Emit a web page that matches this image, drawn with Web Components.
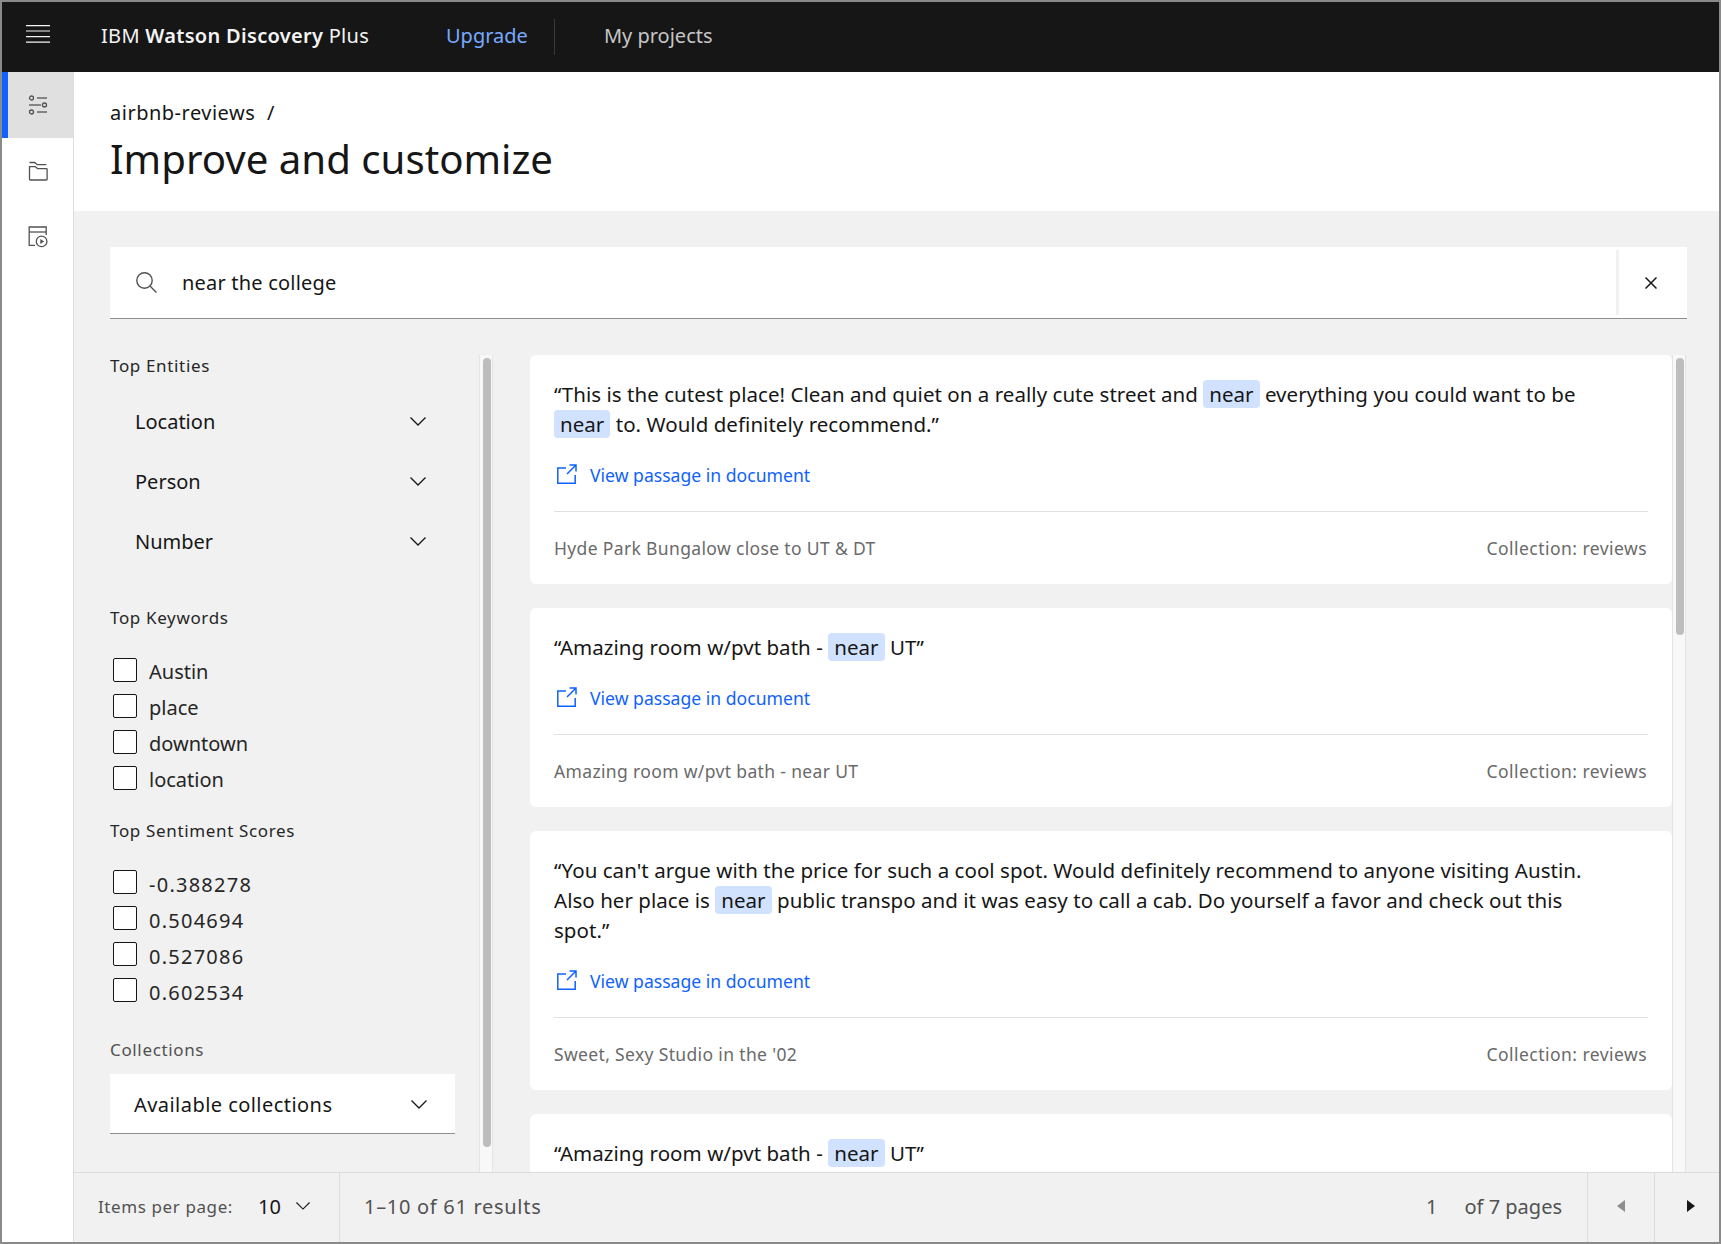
<!DOCTYPE html>
<html lang="en">
<head>
<meta charset="utf-8">
<title>IBM Watson Discovery Plus</title>
<style>
  html, body { margin: 0; padding: 0; background: #8a8a8a; }
  body { font-family: "Noto Sans", "Liberation Sans", sans-serif; color: #161616; overflow: hidden; }
</style>
</head>
<body>
<wd-app>
  <wd-topbar slot="top"></wd-topbar>
  <wd-rail slot="rail"></wd-rail>
  <wd-page-head slot="head" crumb="airbnb-reviews" title="Improve and customize"></wd-page-head>
  <wd-search slot="search" value="near the college"></wd-search>
  <wd-filters slot="filters"></wd-filters>
  <wd-results slot="results">
    <wd-result-card name="Hyde Park Bungalow close to UT &amp; DT">“This is the cutest place! Clean and quiet on a really cute street and <wd-hit>near</wd-hit> everything you could want to be<br><wd-hit>near</wd-hit> to. Would definitely recommend.”</wd-result-card>
    <wd-result-card name="Amazing room w/pvt bath - near UT">“Amazing room w/pvt bath - <wd-hit>near</wd-hit> UT”</wd-result-card>
    <wd-result-card name="Sweet, Sexy Studio in the '02">“You can't argue with the price for such a cool spot. Would definitely recommend to anyone visiting Austin.<br>Also her place is <wd-hit>near</wd-hit> public transpo and it was easy to call a cab. Do yourself a favor and check out this<br>spot.”</wd-result-card>
    <wd-result-card partial>“Amazing room w/pvt bath - <wd-hit>near</wd-hit> UT”</wd-result-card>
  </wd-results>
  <wd-pager slot="pager"></wd-pager>
</wd-app>

<script>
const chevron = `<svg width="16" height="9" viewBox="0 0 16 9" fill="none" stroke="currentColor" stroke-width="1.3"><path d="M.5.5 8 8 15.5.5"/></svg>`;

class WdApp extends HTMLElement {
  constructor() {
    super();
    this.attachShadow({ mode: 'open' });
    this.shadowRoot.innerHTML = `
      <style>
        :host {
          display: grid;
          grid-template-columns: 72px 1fr;
          grid-template-rows: 70px 1fr;
          width: 1717px;
          height: 1240px;
          margin: 2px;
          background: #fff;
          overflow: hidden;
        }
        .top { grid-column: 1 / 3; }
        .main { display: flex; flex-direction: column; min-height: 0; min-width: 0; }
        .work {
          flex: 1;
          min-height: 0;
          background: #f1f1f1;
          padding: 36px 32px 0 36px;
          display: flex;
          flex-direction: column;
          overflow: hidden;
        }
        .cols {
          flex: 1;
          min-height: 0;
          display: flex;
          margin-top: 36px;
          margin-right: 1px;
        }
      </style>
      <div class="top"><slot name="top"></slot></div>
      <slot name="rail"></slot>
      <div class="main">
        <slot name="head"></slot>
        <div class="work">
          <slot name="search"></slot>
          <div class="cols">
            <slot name="filters"></slot>
            <slot name="results"></slot>
          </div>
        </div>
        <slot name="pager"></slot>
      </div>
    `;
  }
}

class WdTopbar extends HTMLElement {
  constructor() {
    super();
    this.attachShadow({ mode: 'open' });
    this.shadowRoot.innerHTML = `
      <style>
        :host {
          display: flex;
          align-items: center;
          height: 70px;
          box-sizing: border-box;
          padding-bottom: 4px;
          background: #161616;
          color: #f4f4f4;
          font-size: 20px;
        }
        .menu { display: flex; width: 99px; padding-left: 24px; box-sizing: border-box; margin-top: -3px; }
        .brand { width: 345px; white-space: nowrap; letter-spacing: .3px; }
        .brand b { font-weight: 600; }
        .upgrade { color: #78a9ff; }
        .sep { width: 1px; height: 36px; background: #393939; margin: 4px 49px 0 26px; }
        .projects { color: #c6c6c6; }
      </style>
      <div class="menu">
        <svg width="24" height="18" viewBox="0 0 24 18" stroke="#f4f4f4" stroke-width="1.2"><path d="M0 .6h24M0 6h24M0 11.6h24M0 17.2h24"/></svg>
      </div>
      <div class="brand">IBM <b>Watson Discovery</b> Plus</div>
      <div class="upgrade">Upgrade</div>
      <div class="sep"></div>
      <div class="projects">My projects</div>
    `;
  }
}

class WdRail extends HTMLElement {
  constructor() {
    super();
    this.attachShadow({ mode: 'open' });
    this.shadowRoot.innerHTML = `
      <style>
        :host {
          display: block;
          box-sizing: border-box;
          border-right: 1px solid #dcdcdc;
          background: #fff;
          color: #525252;
        }
        .item { display: flex; align-items: center; justify-content: center; height: 66px; box-sizing: border-box; }
        .item.on { background: #e0e0e0; border-left: 6px solid #0f62fe; padding-right: 6px; }
        svg { display: block; }
      </style>
      <div class="item on">
        <svg width="20" height="20" viewBox="0 0 20 20" fill="none" stroke="currentColor" stroke-width="1.3">
          <circle cx="3.5" cy="3" r="2"/><path d="M9 3h10"/>
          <path d="M1 10h12"/><circle cx="16.5" cy="10" r="2"/>
          <circle cx="3.5" cy="17" r="2"/><path d="M9 17h10"/>
        </svg>
      </div>
      <div class="item">
        <svg width="20" height="20" viewBox="0 0 20 20" fill="none" stroke="currentColor" stroke-width="1.3">
          <path d="M1.5 1.5h5.2l2.6 2.2h9"/>
          <path d="M1.5 5.6h5.8l2.2 2h8.8a.8.8 0 0 1 .8.8v9.8a.8.8 0 0 1-.8.8H2.3a.8.8 0 0 1-.8-.8z"/>
        </svg>
      </div>
      <div class="item">
        <svg width="20" height="22" viewBox="0 0 20 22" fill="none" stroke="currentColor" stroke-width="1.3">
          <path d="M7 19.4H1.2V1h17v8"/><path d="M1.2 6h17"/>
          <circle cx="13.6" cy="15.4" r="5.3"/>
          <path d="M12.3 12.9v5l3.8-2.5z" fill="currentColor" stroke="none"/>
        </svg>
      </div>
    `;
  }
}

class WdPageHead extends HTMLElement {
  constructor() {
    super();
    this.attachShadow({ mode: 'open' });
    this.shadowRoot.innerHTML = `
      <style>
        :host {
          display: block;
          height: 139px;
          box-sizing: border-box;
          padding: 26px 0 0 36px;
          background: #fff;
        }
        .crumb { font-size: 20px; line-height: 30px; letter-spacing: .5px; }
        .crumb span { margin-left: 6px; }
        h1 { margin: 5px 0 0; font-size: 40.2px; line-height: 52px; font-weight: 400; color: #161616; }
      </style>
      <div class="crumb">${this.getAttribute('crumb')} <span>/</span></div>
      <h1>${this.getAttribute('title')}</h1>
    `;
  }
}

class WdSearch extends HTMLElement {
  constructor() {
    super();
    this.attachShadow({ mode: 'open' });
    this.shadowRoot.innerHTML = `
      <style>
        :host {
          display: flex;
          align-items: center;
          height: 72px;
          box-sizing: border-box;
          background: #fff;
          border-bottom: 1.5px solid #8d8d8d;
          flex: none;
        }
        .glass { margin-left: 26px; display: flex; color: #525252; }
        .text { margin-left: 25px; flex: 1; font-size: 20px; letter-spacing: .2px; }
        .clear {
          align-self: stretch;
          margin: 3px 0 3px;
          width: 71px;
          box-sizing: border-box;
          padding-right: 4px;
          border-left: 3px solid #f1f1f1;
          display: flex;
          align-items: center;
          justify-content: center;
        }
      </style>
      <div class="glass">
        <svg width="21" height="21" viewBox="0 0 21 21" fill="none" stroke="currentColor" stroke-width="1.4"><circle cx="8.5" cy="8.5" r="7.7"/><path d="m14 14 6.4 6.4"/></svg>
      </div>
      <div class="text">${this.getAttribute('value')}</div>
      <div class="clear">
        <svg width="12" height="12" viewBox="0 0 12 12" fill="none" stroke="#161616" stroke-width="1.5"><path d="m.5.5 11 11M11.5.5l-11 11"/></svg>
      </div>
    `;
  }
}

class WdFilters extends HTMLElement {
  constructor() {
    super();
    this.attachShadow({ mode: 'open' });
    const rows = (items, attr = '') => items.map((t) => `<wd-check ${attr}>${t}</wd-check>`).join('');
    this.shadowRoot.innerHTML = `
      <style>
        :host { display: flex; width: 383px; flex: none; min-height: 0; margin-right: 37px; }
        .panel { width: 369px; flex: none; overflow: hidden; }
        h2 { margin: 0; font-size: 17px; line-height: 22px; font-weight: 400; letter-spacing: .65px; color: #262626; }
        h2.dim { color: #525252; }
        .entities { margin: 15px 0 35px; }
        .checks { margin: 23px 0 24px; }
        .checks.two { margin: 22px 0 31px; }
        .select { margin-top: 13px; }
      </style>
      <div class="panel">
        <h2>Top Entities</h2>
        <div class="entities">
          <wd-facet>Location</wd-facet>
          <wd-facet>Person</wd-facet>
          <wd-facet>Number</wd-facet>
        </div>
        <h2>Top Keywords</h2>
        <div class="checks">${rows(['Austin', 'place', 'downtown', 'location'])}</div>
        <h2>Top Sentiment Scores</h2>
        <div class="checks two">${rows(['-0.388278', '0.504694', '0.527086', '0.602534'], 'num')}</div>
        <h2 class="dim">Collections</h2>
        <div class="select"><wd-select>Available collections</wd-select></div>
      </div>
      <wd-scrollbar thumb="789"></wd-scrollbar>
    `;
  }
}

class WdFacet extends HTMLElement {
  constructor() {
    super();
    this.attachShadow({ mode: 'open' });
    this.shadowRoot.innerHTML = `
      <style>
        :host {
          display: flex;
          align-items: center;
          justify-content: space-between;
          height: 60px;
          box-sizing: border-box;
          padding: 0 53px 2px 25px;
          font-size: 20px;
          color: #161616;
        }
        svg { display: block; }
      </style>
      <slot></slot>${chevron}
    `;
  }
}

class WdCheck extends HTMLElement {
  constructor() {
    super();
    this.attachShadow({ mode: 'open' });
    this.shadowRoot.innerHTML = `
      <style>
        :host {
          display: flex;
          align-items: center;
          height: 36px;
          padding-left: 3px;
          font-size: 20px;
          color: #262626;
        }
        :host([num]) { letter-spacing: 1.25px; }
        .box {
          width: 24px;
          height: 24px;
          box-sizing: border-box;
          border: 1.5px solid #161616;
          border-radius: 2px;
          background: #fff;
          margin: -1px 12px 0 0;
        }
        .label { position: relative; top: 1px; }
        :host([num]) .label { top: 2px; }
      </style>
      <div class="box"></div><div class="label"><slot></slot></div>
    `;
  }
}

class WdSelect extends HTMLElement {
  constructor() {
    super();
    this.attachShadow({ mode: 'open' });
    this.shadowRoot.innerHTML = `
      <style>
        :host {
          display: flex;
          align-items: center;
          justify-content: space-between;
          width: 345px;
          height: 60px;
          box-sizing: border-box;
          padding: 2px 28px 0 24px;
          background: #fff;
          border-bottom: 1.5px solid #8d8d8d;
          font-size: 20px;
          letter-spacing: .45px;
        }
        svg { display: block; }
      </style>
      <slot></slot>${chevron}
    `;
  }
}

class WdScrollbar extends HTMLElement {
  constructor() {
    super();
    this.attachShadow({ mode: 'open' });
    this.shadowRoot.innerHTML = `
      <style>
        :host {
          display: block;
          width: 14px;
          flex: none;
          box-sizing: border-box;
          padding: 3px 3px 0 3px;
          background: #f8f8f8;
          border-left: 1px solid #e4e4e4;
          border-right: 1px solid #e4e4e4;
        }
        .thumb { width: 8px; height: ${this.getAttribute('thumb')}px; background: #bdbdbd; border-radius: 4px; margin-left: 0; }
      </style>
      <div class="thumb"></div>
    `;
  }
}

class WdResults extends HTMLElement {
  constructor() {
    super();
    this.attachShadow({ mode: 'open' });
    this.shadowRoot.innerHTML = `
      <style>
        :host { display: flex; flex: 1; min-width: 0; min-height: 0; }
        .list {
          flex: 1;
          min-width: 0;
          display: flex;
          flex-direction: column;
          gap: 24px;
          overflow: hidden;
        }
      </style>
      <div class="list"><slot></slot></div>
      <wd-scrollbar thumb="277"></wd-scrollbar>
    `;
  }
}

class WdResultCard extends HTMLElement {
  constructor() {
    super();
    this.attachShadow({ mode: 'open' });
    // the last card runs under the pager, only its quote shows
    const partial = this.hasAttribute('partial');
    this.shadowRoot.innerHTML = `
      <style>
        :host {
          display: block;
          flex: none;
          box-sizing: border-box;
          padding: 24px 24px 0 24px;
          background: #fff;
          border-radius: 6px;
          font-size: 20.5px;
          letter-spacing: .04px;
          line-height: 30px;
          color: #161616;
        }
        :host([partial]) { padding-bottom: 40px; }
        .link {
          display: flex;
          align-items: center;
          gap: 13px;
          height: 30px;
          margin-top: 21px;
          padding-left: 3px;
          color: #0f62fe;
          font-size: 17.6px;
          letter-spacing: 0;
        }
        svg { display: block; margin-top: -2px; }
        .meta {
          display: flex;
          justify-content: space-between;
          margin-top: 21px;
          border-top: 1.5px solid #e0e0e0;
          padding: 22px 1px 0 0;
          height: 73px;
          box-sizing: border-box;
          font-size: 17.5px;
          letter-spacing: .35px;
          line-height: 28px;
          color: #6a6a6a;
        }
        .meta span:last-child { letter-spacing: .45px; }
      </style>
      <div><slot></slot></div>
      ${partial ? '' : `
      <div class="link">
        <svg width="20" height="20" viewBox="0 0 20 20" fill="none" stroke="currentColor" stroke-width="1.5"><path d="M9 4H.8v15.2h17.4V11"/><path d="M10 10 19 1M12.5 1H19v6.5"/></svg>
        View passage in document
      </div>
      <div class="meta"><span>${this.getAttribute('name')}</span><span>Collection: reviews</span></div>`}
    `;
  }
}

class WdHit extends HTMLElement {
  constructor() {
    super();
    this.attachShadow({ mode: 'open' });
    this.shadowRoot.innerHTML = `
      <style>
        :host {
          display: inline-block;
          height: 28px;
          line-height: 28px;
          padding: 0 6px;
          background: #d0e2ff;
          border-radius: 4px;
        }
      </style>
      <slot></slot>
    `;
  }
}

class WdPager extends HTMLElement {
  constructor() {
    super();
    this.attachShadow({ mode: 'open' });
    this.shadowRoot.innerHTML = `
      <style>
        :host {
          display: flex;
          align-items: stretch;
          height: 70px;
          flex: none;
          box-sizing: border-box;
          background: #f1f1f1;
          border-top: 1.5px solid #dcdcdc;
          color: #525252;
          font-size: 20px;
        }
        .cell { display: flex; align-items: center; border-right: 1.5px solid #dcdcdc; padding-bottom: 3px; box-sizing: border-box; }
        .per { width: 266px; padding-left: 24px; }
        .per small { font-size: 17px; letter-spacing: .6px; width: 160px; }
        .per b { font-weight: 400; color: #161616; width: 38px; }
        .per svg { display: block; width: 14px; height: 8px; color: #161616; }
        .count { flex: 1; padding-left: 24px; border-right: 0; letter-spacing: .7px; }
        .pages { padding-right: 25px; border-right: 1.5px solid #dcdcdc; }
        .pages i { font-style: normal; margin-right: 27px; }
        .arrow { width: 67px; justify-content: center; }
        .arrow:last-child { width: 64px; padding-left: 8px; border-right: 0; }
      </style>
      <div class="cell per"><small>Items per page:</small><b>10</b>${chevron}</div>
      <div class="cell count">1–10 of 61 results</div>
      <div class="cell pages"><i>1</i>of 7 pages</div>
      <div class="cell arrow"><svg width="8" height="12" viewBox="0 0 8 12"><path d="M8 0v12L0 6z" fill="#8d8d8d"/></svg></div>
      <div class="cell arrow"><svg width="8" height="12" viewBox="0 0 8 12"><path d="M0 0v12l8-6z" fill="#161616"/></svg></div>
    `;
  }
}

customElements.define('wd-app', WdApp);
customElements.define('wd-topbar', WdTopbar);
customElements.define('wd-rail', WdRail);
customElements.define('wd-page-head', WdPageHead);
customElements.define('wd-search', WdSearch);
customElements.define('wd-filters', WdFilters);
customElements.define('wd-facet', WdFacet);
customElements.define('wd-check', WdCheck);
customElements.define('wd-select', WdSelect);
customElements.define('wd-scrollbar', WdScrollbar);
customElements.define('wd-results', WdResults);
customElements.define('wd-result-card', WdResultCard);
customElements.define('wd-hit', WdHit);
customElements.define('wd-pager', WdPager);
</script>
</body>
</html>
